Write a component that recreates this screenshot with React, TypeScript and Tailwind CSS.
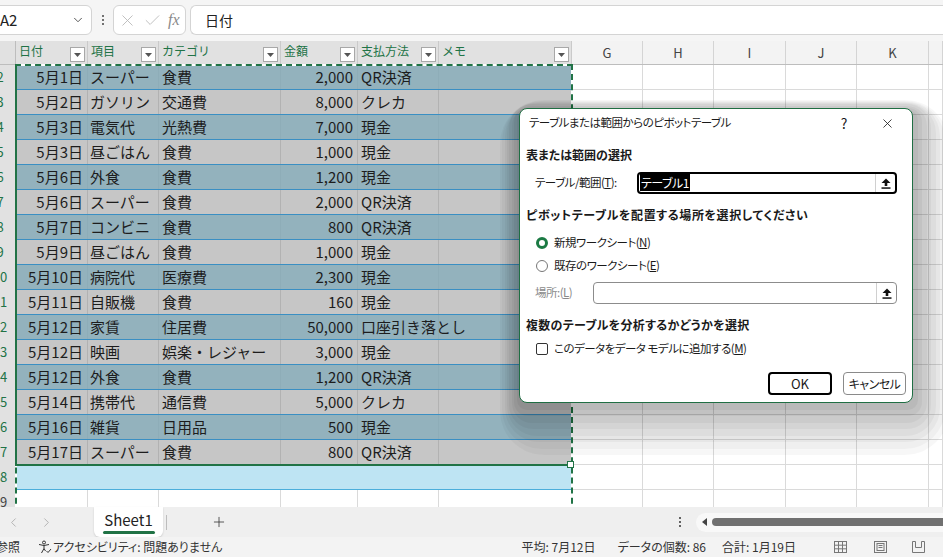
import { Check, ChevronDown, ChevronLeft, ChevronRight, Plus, X } from 'lucide-react';

type Col = { label: string; w: string; right?: boolean; pad: string };

const tableCols: Col[] = [
  { label: '日付', w: 'w-[72px]', right: true, pad: 'pr-[4px]' },
  { label: '項目', w: 'w-[71px]', pad: 'pl-[2px]' },
  { label: 'カテゴリ', w: 'w-[122px]', pad: 'pl-[3px]' },
  { label: '金額', w: 'w-[77px]', right: true, pad: 'pr-[4px]' },
  { label: '支払方法', w: 'w-[81px]', pad: 'pl-[3px]' },
  { label: 'メモ', w: 'w-[133px]', pad: 'pl-[3px]' },
];

const restCols = [
  { label: 'G', w: 'w-[71px]' },
  { label: 'H', w: 'w-[71px]' },
  { label: 'I', w: 'w-[72px]' },
  { label: 'J', w: 'w-[71px]' },
  { label: 'K', w: 'w-[72px]' },
  { label: '', w: 'flex-1' },
];

const rows = [
  ['5月1日', 'スーパー', '食費', '2,000', 'QR決済'],
  ['5月2日', 'ガソリン', '交通費', '8,000', 'クレカ'],
  ['5月3日', '電気代', '光熱費', '7,000', '現金'],
  ['5月3日', '昼ごはん', '食費', '1,000', '現金'],
  ['5月6日', '外食', '食費', '1,200', '現金'],
  ['5月6日', 'スーパー', '食費', '2,000', 'QR決済'],
  ['5月7日', 'コンビニ', '食費', '800', 'QR決済'],
  ['5月9日', '昼ごはん', '食費', '1,000', '現金'],
  ['5月10日', '病院代', '医療費', '2,300', '現金'],
  ['5月11日', '自販機', '食費', '160', '現金'],
  ['5月12日', '家賃', '住居費', '50,000', '口座引き落とし'],
  ['5月12日', '映画', '娯楽・レジャー', '3,000', '現金'],
  ['5月12日', '外食', '食費', '1,200', 'QR決済'],
  ['5月14日', '携帯代', '通信費', '5,000', 'クレカ'],
  ['5月16日', '雑貨', '日用品', '500', '現金'],
  ['5月17日', 'スーパー', '食費', '800', 'QR決済'],
];

function RowHeader({ n, selected }: { n: number; selected: boolean }) {
  return (
    <div className="w-[16px] shrink-0 overflow-hidden border-r border-[#bdbdbd] bg-[#e1e1e1]">
      <div
        className={`-ml-[16px] w-[32px] text-center text-[13px] leading-[24px] ${
          selected ? 'text-[#217346]' : 'text-[#444]'
        }`}
      >
        {n}
      </div>
    </div>
  );
}

function RestCells() {
  return (
    <>
      {restCols.map((c, i) => (
        <div key={i} className={`${c.w} shrink-0 border-r border-[#dadada] bg-white`} />
      ))}
    </>
  );
}

function UpArrow() {
  return (
    <svg width="10" height="11" viewBox="0 0 10 11">
      <path d="M5 0.5 L9.5 5 H6.3 V8 H3.7 V5 H0.5 Z" fill="#111" />
      <rect x="0.5" y="9.3" width="9" height="1.5" fill="#111" />
    </svg>
  );
}

// soft drop shadow made of stacked translucent layers, heavier to the right and below
function DialogShadow() {
  return (
    <>
      <div className="absolute left-[500px] top-[100px] h-[355px] w-[449px] rounded-[44px] bg-black/[0.03]" />
      <div className="absolute left-[502px] top-[101px] h-[348px] w-[443px] rounded-[40px] bg-black/[0.03]" />
      <div className="absolute left-[505px] top-[102px] h-[340px] w-[435px] rounded-[34px] bg-black/[0.035]" />
      <div className="absolute left-[507px] top-[103px] h-[333px] w-[429px] rounded-[30px] bg-black/[0.035]" />
      <div className="absolute left-[509px] top-[104px] h-[325px] w-[422px] rounded-[24px] bg-black/[0.04]" />
      <div className="absolute left-[512px] top-[106px] h-[317px] w-[415px] rounded-[20px] bg-black/[0.04]" />
      <div className="absolute left-[514px] top-[108px] h-[308px] w-[408px] rounded-[14px] bg-black/[0.045]" />
      <div className="absolute left-[517px] top-[110px] h-[300px] w-[401px] rounded-[10px] bg-black/[0.045]" />
    </>
  );
}

function Dialog() {
  return (
    <div className="absolute left-[519px] top-[108px] flex h-[295px] w-[394px] flex-col rounded-[8px] border border-[#1f6e43] bg-white px-[6px] text-[11.5px] tracking-[-0.5px] text-[#1a1a1a] [font-feature-settings:'palt']">
      <div className="flex h-[28px] shrink-0 items-center">
        <span className="ml-[3px] flex-1">テーブルまたは範囲からのピボットテーブル</span>
        <span className="mr-[33px] text-[14px]">?</span>
        <X className="mr-[11px] h-[15px] w-[15px]" strokeWidth={1.3} />
      </div>
      <div className="mt-[8px] flex h-[20px] items-center text-[12px] font-bold tracking-normal">表または範囲の選択</div>
      <div className="mt-[7px] flex h-[22px] items-center">
        <span className="ml-[9px] w-[102px]">
          テーブル/範囲(<span className="underline">T</span>):
        </span>
        <div className="flex h-[22px] flex-1 items-center rounded-[4px] border-2 border-black pl-[1px]">
          <span className="flex-1 text-[12px]">
            <span className="bg-black px-[1px] text-white">テーブル1</span>
          </span>
          <span className="flex h-full w-[20px] items-center justify-center border-l border-[#d0d0d0]">
            <UpArrow />
          </span>
        </div>
        <span className="w-[9px]" />
      </div>
      <div className="mt-[11px] flex h-[20px] items-center text-[12px] font-bold tracking-[0.6px]">ピボットテーブルを配置する場所を選択してください</div>
      <div className="mt-[8px] flex h-[20px] items-center">
        <span className="ml-[10px] h-[12px] w-[12px] rounded-full border-[3px] border-[#1b7a43] bg-white" />
        <span className="ml-[6px]">
          新規ワークシート(<span className="underline">N</span>)
        </span>
      </div>
      <div className="mt-[3px] flex h-[20px] items-center">
        <span className="ml-[10px] h-[12px] w-[12px] rounded-full border border-[#777]" />
        <span className="ml-[6px]">
          既存のワークシート(<span className="underline">E</span>)
        </span>
      </div>
      <div className="mt-[6px] flex h-[22px] items-center">
        <span className="ml-[9px] w-[58px] text-[#8a8a8a]">
          場所:(<span className="underline">L</span>)
        </span>
        <div className="flex h-[22px] flex-1 items-center rounded-[4px] border border-[#8c8c8c]">
          <span className="flex-1" />
          <span className="flex h-full w-[20px] items-center justify-center border-l border-[#d0d0d0]">
            <UpArrow />
          </span>
        </div>
        <span className="w-[9px]" />
      </div>
      <div className="mt-[11px] flex h-[20px] items-center text-[12px] font-bold tracking-[0.3px]">複数のテーブルを分析するかどうかを選択</div>
      <div className="mt-[4px] flex h-[20px] items-center">
        <span className="ml-[10px] h-[12px] w-[12px] rounded-[2px] border border-[#333]" />
        <span className="ml-[6px]">
          このデータをデータ モデルに追加する(<span className="underline">M</span>)
        </span>
      </div>
      <div className="mt-[13px] flex h-[23px] justify-end gap-[11px]">
        <button className="h-[23px] w-[64px] rounded-[4px] border-2 border-black text-[13px] tracking-normal">OK</button>
        <button className="h-[23px] w-[63px] rounded-[4px] border border-[#8a8a8a] text-[12px]">キャンセル</button>
      </div>
    </div>
  );
}

export default function App() {
  return (
    <div className="relative flex h-[557px] w-[943px] flex-col overflow-hidden bg-white font-['Noto_Sans_CJK_JP',sans-serif] text-[#222]">
      {/* formula bar */}
      <div className="flex h-[41px] shrink-0 items-start bg-[#f5f5f5] pt-[5px]">
        <div className="-ml-[8px] flex h-[30px] w-[100px] items-center rounded-[6px] border border-[#d4d4d4] bg-white pl-[7px] pr-[6px]">
          <span className="flex-1 text-[15px]">A2</span>
          <ChevronDown className="h-[14px] w-[14px] text-[#333]" strokeWidth={1.4} />
        </div>
        <div className="flex h-[30px] w-[21px] flex-col items-center justify-center gap-[2px]">
          <span className="h-[2px] w-[2px] rounded-full bg-[#444]" />
          <span className="h-[2px] w-[2px] rounded-full bg-[#444]" />
          <span className="h-[2px] w-[2px] rounded-full bg-[#444]" />
        </div>
        <div className="flex h-[30px] w-[73px] items-center rounded-[6px] border border-[#d4d4d4] bg-white pl-[4px]">
          <X className="h-[19px] w-[19px] text-[#b8b8b8]" strokeWidth={1.1} />
          <Check className="ml-[6px] h-[19px] w-[19px] text-[#b8b8b8]" strokeWidth={1.1} />
          <span className="ml-[6px] font-['Liberation_Serif',serif] text-[16px] italic text-[#8a8a8a]">fx</span>
        </div>
        <div className="ml-[4px] flex h-[30px] flex-1 items-center rounded-l-[6px] border border-r-0 border-[#d4d4d4] bg-white pl-[14px] text-[14px]">
          日付
        </div>
      </div>

      {/* grid */}
      <div className="relative h-[466px] shrink-0 overflow-hidden">
        <div className="flex h-[24px] border-b border-[#bdbdbd]">
          <div className="w-[16px] shrink-0 border-r border-[#bdbdbd] bg-[#e1e1e1]" />
          {tableCols.map((c) => (
            <div
              key={c.label}
              className={`${c.w} flex shrink-0 justify-between border-r border-[#cacaca] bg-[#e1e1e1] pl-[3px] pr-[2px]`}
            >
              <span className="text-[12px] leading-[20px] text-[#217346]">{c.label}</span>
              <span className="mb-[2px] flex h-[15px] w-[15px] items-center justify-center self-end border border-[#a8a8a8] bg-white">
                <svg width="7" height="4" viewBox="0 0 7 4">
                  <path d="M0 0H7L3.5 4Z" fill="#555" />
                </svg>
              </span>
            </div>
          ))}
          {restCols.map((c, i) => (
            <div
              key={i}
              className={`${c.w} shrink-0 border-r border-[#d4d4d4] bg-[#f3f3f3] text-center text-[13px] leading-[23px] text-[#444]`}
            >
              {c.label}
            </div>
          ))}
        </div>

        {rows.map((r, i) => {
          const blue = i % 2 === 0;
          return (
            <div key={i} className="flex h-[25px]">
              <RowHeader n={i + 2} selected />
              <div
                className={`flex w-[556px] shrink-0 border-b border-[#3a8fc3] text-[15px] leading-[24px] text-[#1d1d1d] ${
                  blue ? 'bg-[#93b2bd]' : 'bg-[#c6c6c6]'
                }`}
              >
                {tableCols.map((c, j) => (
                  <div
                    key={j}
                    className={`${c.w} ${c.pad} shrink-0 whitespace-nowrap border-r ${
                      blue ? 'border-[#8eadb8]' : 'border-[#b2b2b2]'
                    } ${c.right ? 'text-right' : 'text-left'}`}
                  >
                    {r[j] ?? ''}
                  </div>
                ))}
              </div>
              <div className="flex flex-1 border-b border-[#dadada]">
                <RestCells />
              </div>
            </div>
          );
        })}

        <div className="flex h-[25px]">
          <RowHeader n={18} selected />
          <div className="w-[556px] shrink-0 border-b border-[#4caedb] bg-[#bee4f3]" />
          <div className="flex flex-1 border-b border-[#dadada]">
            <RestCells />
          </div>
        </div>
        <div className="flex h-[25px]">
          <RowHeader n={19} selected={false} />
          <div className="flex flex-1 border-b border-[#dadada]">
            <div className="w-[72px] shrink-0 border-r border-[#dadada]" />
            <div className="w-[71px] shrink-0 border-r border-[#dadada]" />
            <div className="w-[122px] shrink-0 border-r border-[#dadada]" />
            <div className="w-[77px] shrink-0 border-r border-[#dadada]" />
            <div className="w-[81px] shrink-0 border-r border-[#dadada]" />
            <div className="w-[133px] shrink-0 border-r border-[#dadada]" />
            <RestCells />
          </div>
        </div>

        {/* marching ants around the copied range */}
        <div className="absolute left-[15px] top-[23px] h-[480px] w-[558px] border-2 border-white" />
        <div className="absolute left-[15px] top-[23px] h-[480px] w-[558px] border-2 border-dashed border-[#217346]" />
        {/* active selection */}
        <div className="absolute left-[15px] top-[23px] h-[401px] w-[2px] bg-[#217346]" />
        <div className="absolute left-[15px] top-[423px] h-[2px] w-[556px] bg-[#217346]" />
        <div className="absolute left-[567px] top-[420px] h-[7px] w-[7px] border border-[#217346] bg-white" />
      </div>

      {/* sheet tabs */}
      <div className="flex h-[30px] shrink-0 items-center bg-[#efefef]">
        <ChevronLeft className="ml-[6px] h-[15px] w-[15px] text-[#a6a6a6]" strokeWidth={1.3} />
        <ChevronRight className="ml-[18px] h-[15px] w-[15px] text-[#a6a6a6]" strokeWidth={1.3} />
        <div className="ml-[40px] flex h-[30px] w-[69px] flex-col items-center self-start rounded-b-[6px] bg-white shadow-[0_1px_2px_rgba(0,0,0,0.15)]">
          <span className="mt-[3px] text-[15px] leading-[20px] text-[#222]">Sheet1</span>
          <span className="mt-[1px] h-[3px] w-[52px] rounded-full bg-[#217346]" />
        </div>
        <span className="ml-[3px] h-[15px] w-[1px] bg-[#bdbdbd]" />
        <Plus className="ml-[44px] h-[16px] w-[16px] text-[#333]" strokeWidth={1.2} />
        <div className="ml-[452px] flex flex-col gap-[2px]">
          <span className="h-[2px] w-[2px] rounded-full bg-[#333]" />
          <span className="h-[2px] w-[2px] rounded-full bg-[#333]" />
          <span className="h-[2px] w-[2px] rounded-full bg-[#333]" />
        </div>
        <div className="ml-[15px] flex h-[19px] flex-1 items-center rounded-l-full bg-[#f8f8f8] pl-[6px]">
          <svg width="5" height="8" viewBox="0 0 5 8">
            <path d="M5 0V8L0 4Z" fill="#444" />
          </svg>
          <span className="ml-[5px] h-[8px] flex-1 rounded-l-full bg-[#707070]" />
        </div>
      </div>

      {/* status bar */}
      <div className="flex h-[20px] shrink-0 items-center bg-[#f3f3f3] text-[12px] text-[#333] [font-feature-settings:'palt']">
        <span className="-ml-[4px]">参照</span>
        <svg className="ml-[18px]" width="14" height="14" viewBox="0 0 14 14" fill="none" stroke="#333" strokeWidth="1">
          <circle cx="6" cy="2.5" r="1.5" />
          <path d="M1 4.5 L6 5.5 L11 4.5" />
          <path d="M6 5.5 V8.5 L3.5 13 M6 8.5 L7.5 11" />
          <path d="M8.5 11 L10 12.5 L13 9" />
        </svg>
        <span className="ml-[1px]">アクセシビリティ: 問題ありません</span>
        <span className="ml-auto">平均: 7月12日</span>
        <span className="ml-[22px]">データの個数: 86</span>
        <span className="ml-[16px]">合計: 1月19日</span>
        <svg className="ml-[38px]" width="13" height="12" viewBox="0 0 13 12" fill="none" stroke="#777" strokeWidth="1">
          <rect x="0.5" y="0.5" width="12" height="11" />
          <path d="M4.5 0.5V11.5M8.5 0.5V11.5M0.5 4.2H12.5M0.5 7.8H12.5" />
        </svg>
        <svg className="ml-[27px]" width="13" height="12" viewBox="0 0 13 12" fill="none" stroke="#777" strokeWidth="1">
          <rect x="0.5" y="0.5" width="12" height="11" />
          <rect x="3" y="2.5" width="7" height="7" />
          <path d="M4.5 4.5H8.5M4.5 6.5H8.5" />
        </svg>
        <svg className="ml-[25px] mr-[18px]" width="13" height="12" viewBox="0 0 13 12" fill="none" stroke="#777" strokeWidth="1">
          <path d="M0.5 0.5V11.5H12.5V0.5" />
          <path d="M3.5 0.5V6.5H9.5V0.5" />
          <path d="M0.5 0.5H3.5M9.5 0.5H12.5" />
        </svg>
      </div>

      <DialogShadow />
      <Dialog />
    </div>
  );
}
